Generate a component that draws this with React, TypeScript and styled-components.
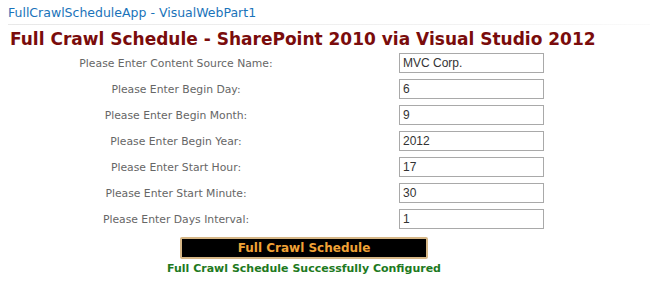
import React from "react";
import styled, { createGlobalStyle } from "styled-components";

const Global = createGlobalStyle`
  html, body { margin: 0; padding: 0; background: #ffffff; }
  body { font-family: "DejaVu Sans", Verdana, sans-serif; }
`;

const Page = styled.div`
  display: flex;
  flex-direction: column;
  width: 650px;
  height: 287px;
  overflow: hidden;
`;

const WebPartTitle = styled.div`
  padding: 5px 0 0 8px;
  height: 19px;
  font-size: 12.5px;
  line-height: 16px;
  color: #1a73ba;
`;

const Separator = styled.div`
  height: 1px;
  margin-left: 8px;
  background: linear-gradient(to right, #e8e8e8, #f2f2f2 70%, #fafafa);
`;

const Heading = styled.h1`
  margin: 3px 0 0 10px;
  font-size: 17px;
  line-height: 22px;
  font-weight: bold;
  color: #7a0c0c;
`;

const Form = styled.div`
  display: grid;
  grid-template-columns: 224px 1fr;
  row-gap: 6px;
  width: 480px;
  margin: 3px 0 0 64px;
  align-items: center;
`;

const Label = styled.label`
  text-align: center;
  font-size: 10.8px;
  color: #666666;
`;

const Input = styled.input`
  justify-self: end;
  box-sizing: border-box;
  width: 145px;
  height: 20px;
  margin: 0;
  padding: 1px 3px;
  border: 1px solid #a9a9a9;
  font-family: "Liberation Sans", Arial, sans-serif;
  font-size: 12px;
  color: #333333;
  background: #ffffff;
  outline: none;
`;

const Actions = styled.div`
  display: flex;
  flex-direction: column;
  align-items: center;
  width: 480px;
  margin: 8px 0 0 64px;
`;

const Button = styled.button`
  box-sizing: border-box;
  width: 248px;
  height: 22px;
  padding: 0;
  background: #000000;
  border: 2px solid #d6b787;
  border-radius: 2px;
  font-family: "DejaVu Sans", Verdana, sans-serif;
  font-size: 12px;
  font-weight: bold;
  color: #f0a236;
  cursor: pointer;
`;

const Message = styled.div`
  margin-top: 3px;
  font-size: 11px;
  font-weight: bold;
  color: #1e7a1e;
`;

const fields: [string, string][] = [
  ["Please Enter Content Source Name:", "MVC Corp."],
  ["Please Enter Begin Day:", "6"],
  ["Please Enter Begin Month:", "9"],
  ["Please Enter Begin Year:", "2012"],
  ["Please Enter Start Hour:", "17"],
  ["Please Enter Start Minute:", "30"],
  ["Please Enter Days Interval:", "1"],
];

export default function App() {
  return (
    <Page>
      <Global />
      <WebPartTitle>FullCrawlScheduleApp - VisualWebPart1</WebPartTitle>
      <Separator />
      <Heading>Full Crawl Schedule - SharePoint 2010 via Visual Studio 2012</Heading>
      <Form>
        {fields.map(([label, value]) => (
          <React.Fragment key={label}>
            <Label>{label}</Label>
            <Input defaultValue={value} />
          </React.Fragment>
        ))}
      </Form>
      <Actions>
        <Button>Full Crawl Schedule</Button>
        <Message>Full Crawl Schedule Successfully Configured</Message>
      </Actions>
    </Page>
  );
}
